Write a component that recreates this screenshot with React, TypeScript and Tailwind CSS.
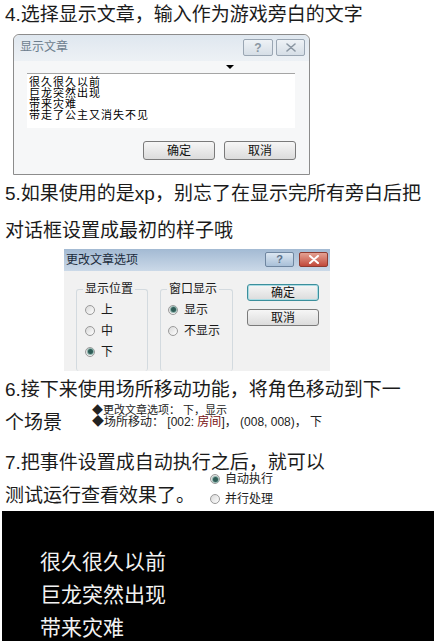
import React from 'react'

const cjk = { fontFamily: '"Liberation Sans", "Noto Sans CJK SC", sans-serif' }

function Radio({ checked = false }: { checked?: boolean }) {
  return (
    <span className="flex h-[10px] w-[10px] shrink-0 items-center justify-center rounded-full border border-[#9a9a9a] bg-gradient-to-br from-[#d8d8d8] to-[#ffffff]">
      {checked && <span className="h-[5px] w-[5px] rounded-full bg-[#2f5d57] shadow-[0_0_0_1px_#8fb3ad]" />}
    </span>
  )
}

function RadioRow({ label, checked }: { label: string; checked?: boolean }) {
  return (
    <div className="flex h-[21px] items-center gap-[6px] text-[12px] text-[#1a1a1a]">
      <Radio checked={checked} />
      <span>{label}</span>
    </div>
  )
}

function WinButton({ label, focus = false }: { label: string; focus?: boolean }) {
  return (
    <div
      className={`flex w-[72px] items-center justify-center rounded-[3px] border bg-gradient-to-b from-[#f6f6f6] to-[#dcdcdc] text-[12px] text-[#111] ${
        focus ? 'border-[#3c8f9c] shadow-[inset_0_0_0_1px_#a9dbe3]' : 'border-[#7a7a7a]'
      }`}
    >
      {label}
    </div>
  )
}

function XIcon({ color, width }: { color: string; width: number }) {
  return (
    <svg width="12" height="9" viewBox="0 0 12 9">
      <path d="M2 1 L10 8 M10 1 L2 8" stroke={color} strokeWidth={width} strokeLinecap="round" fill="none" />
    </svg>
  )
}

function ShowTextDialog() {
  return (
    <div className="ml-[13px] mt-[7px] flex h-[141px] w-[297px] flex-col rounded-t-[6px] border border-[#8c8c8c] bg-[#f6f7f8]">
      <div className="flex h-[26px] items-start justify-between rounded-t-[6px] bg-gradient-to-b from-[#dfe7ef] to-[#edf1f5] pl-[6px] pr-[4px] pt-[4px]">
        <span className="text-[12px] leading-[17px] text-[#6d7d8d]">显示文章</span>
        <div className="flex gap-[3px]">
          <div className="flex h-[17px] w-[30px] items-center justify-center rounded-[2px] border border-[#9aa6b3] bg-gradient-to-b from-[#eef2f6] to-[#d6dee6] text-[12px] font-bold leading-none text-[#8a96a2]">
            ?
          </div>
          <div className="flex h-[17px] w-[29px] items-center justify-center rounded-[2px] border border-[#9aa6b3] bg-gradient-to-b from-[#eef2f6] to-[#d6dee6]">
            <XIcon color="#8a96a2" width={1.6} />
          </div>
        </div>
      </div>
      <div className="flex h-[12px] items-center pl-[212px]">
        <span className="h-0 w-0 border-x-[4px] border-t-[4px] border-x-transparent border-t-black" />
      </div>
      <div className="ml-[13px] h-[55px] w-[268px] border-t border-[#a5a5a5] bg-white pl-[2px] pt-[3px] text-[11px] leading-[11px] tracking-[1px] text-black">
        <div>很久很久以前</div>
        <div>巨龙突然出现</div>
        <div>带来灾难</div>
        <div>带走了公主又消失不见</div>
      </div>
      <div className="mt-[13px] flex h-[19px] justify-end gap-[9px] pr-[13px]">
        <WinButton label="确定" />
        <WinButton label="取消" />
      </div>
    </div>
  )
}

function OptionsDialog() {
  return (
    <div className="ml-[64px] flex h-[122px] w-[266px] flex-col bg-[#f1f1f1]">
      <div className="flex h-[22px] items-start justify-between bg-gradient-to-b from-[#a3bad3] to-[#cbd9e8] pl-[2px] pr-[2px] pt-[3px]">
        <span className="text-[12px] leading-[16px] text-[#1c2c3c]">更改文章选项</span>
        <div className="flex gap-[5px]">
          <div className="flex h-[15px] w-[29px] items-center justify-center rounded-[2px] border border-[#6f86a0] bg-gradient-to-b from-[#dbe6f1] to-[#a9c0d8] text-[11px] font-bold leading-none text-[#5b7088]">
            ?
          </div>
          <div className="flex h-[15px] w-[29px] items-center justify-center rounded-[2px] border border-[#8e3b30] bg-gradient-to-b from-[#e3a193] to-[#c1483b]">
            <XIcon color="#ffffff" width={2} />
          </div>
        </div>
      </div>
      <div className="flex flex-1 pl-[12px]">
        <fieldset className="mt-[11px] w-[72px] rounded-[3px] border border-b-0 border-[#d3dadf] pl-[8px]">
          <legend className="ml-[-2px] px-[2px] text-[12px] leading-[14px] text-[#1a1a1a]">显示位置</legend>
          <div className="pt-[3px]">
            <RadioRow label="上" />
            <RadioRow label="中" />
            <RadioRow label="下" checked />
          </div>
        </fieldset>
        <fieldset className="ml-[12px] mt-[11px] w-[73px] rounded-[3px] border border-b-0 border-[#d3dadf] pl-[7px]">
          <legend className="ml-[-1px] px-[2px] text-[12px] leading-[14px] text-[#1a1a1a]">窗口显示</legend>
          <div className="pt-[3px]">
            <RadioRow label="显示" checked />
            <RadioRow label="不显示" />
          </div>
        </fieldset>
        <div className="ml-[14px] mt-[13px] flex flex-col gap-[8px]">
          <div className="flex h-[17px]">
            <WinButton label="确定" focus />
          </div>
          <div className="flex h-[17px]">
            <WinButton label="取消" />
          </div>
        </div>
      </div>
    </div>
  )
}

export default function App() {
  return (
    <div className="min-h-[641px] w-[434px] overflow-hidden bg-white text-[#1b1b1b]" style={cjk}>
      <div className="pl-[5px] pt-[3px] text-[19px] leading-[24px]">4.选择显示文章，输入作为游戏旁白的文字</div>
      <ShowTextDialog />

      <div className="pl-[5px] text-[19px] leading-[37px]">
        <div>5.如果使用的是xp，别忘了在显示完所有旁白后把</div>
        <div>对话框设置成最初的样子哦</div>
      </div>
      <OptionsDialog />

      <div className="mt-[5px] pl-[5px] text-[19px] leading-[28px]">6.接下来使用场所移动功能，将角色移动到下一</div>
      <div className="flex h-[38px] items-start pl-[5px]">
        <span className="w-[87px] text-[19px] leading-[38px]">个场景</span>
        <div className="text-[11px] leading-[12px] text-[#222]">
          <div>◆更改文章选项： 下，显示</div>
          <div className="text-[12px]">
            ◆场所移动： [002: <span className="text-[#7a1010]">房间</span>]， (008, 008)， 下
          </div>
        </div>
      </div>

      <div className="mt-[6px] pl-[5px] text-[19px] leading-[30px]">7.把事件设置成自动执行之后，就可以</div>
      <div className="flex h-[33px] items-start pl-[5px]">
        <span className="w-[205px] text-[19px] leading-[36px]">测试运行查看效果了。</span>
        <div className="-mt-[9px] text-[12px] leading-[20px]">
          <div className="flex h-[20px] items-center gap-[5px]">
            <Radio checked />
            <span>自动执行</span>
          </div>
          <div className="flex h-[20px] items-center gap-[5px]">
            <Radio />
            <span>并行处理</span>
          </div>
        </div>
      </div>

      <div className="ml-[2px] h-[131px] bg-black pl-[38px] pt-[34px] text-[21px] leading-[33px] text-[#f2f2f2]">
        <div>很久很久以前</div>
        <div>巨龙突然出现</div>
        <div>带来灾难</div>
      </div>
    </div>
  )
}
